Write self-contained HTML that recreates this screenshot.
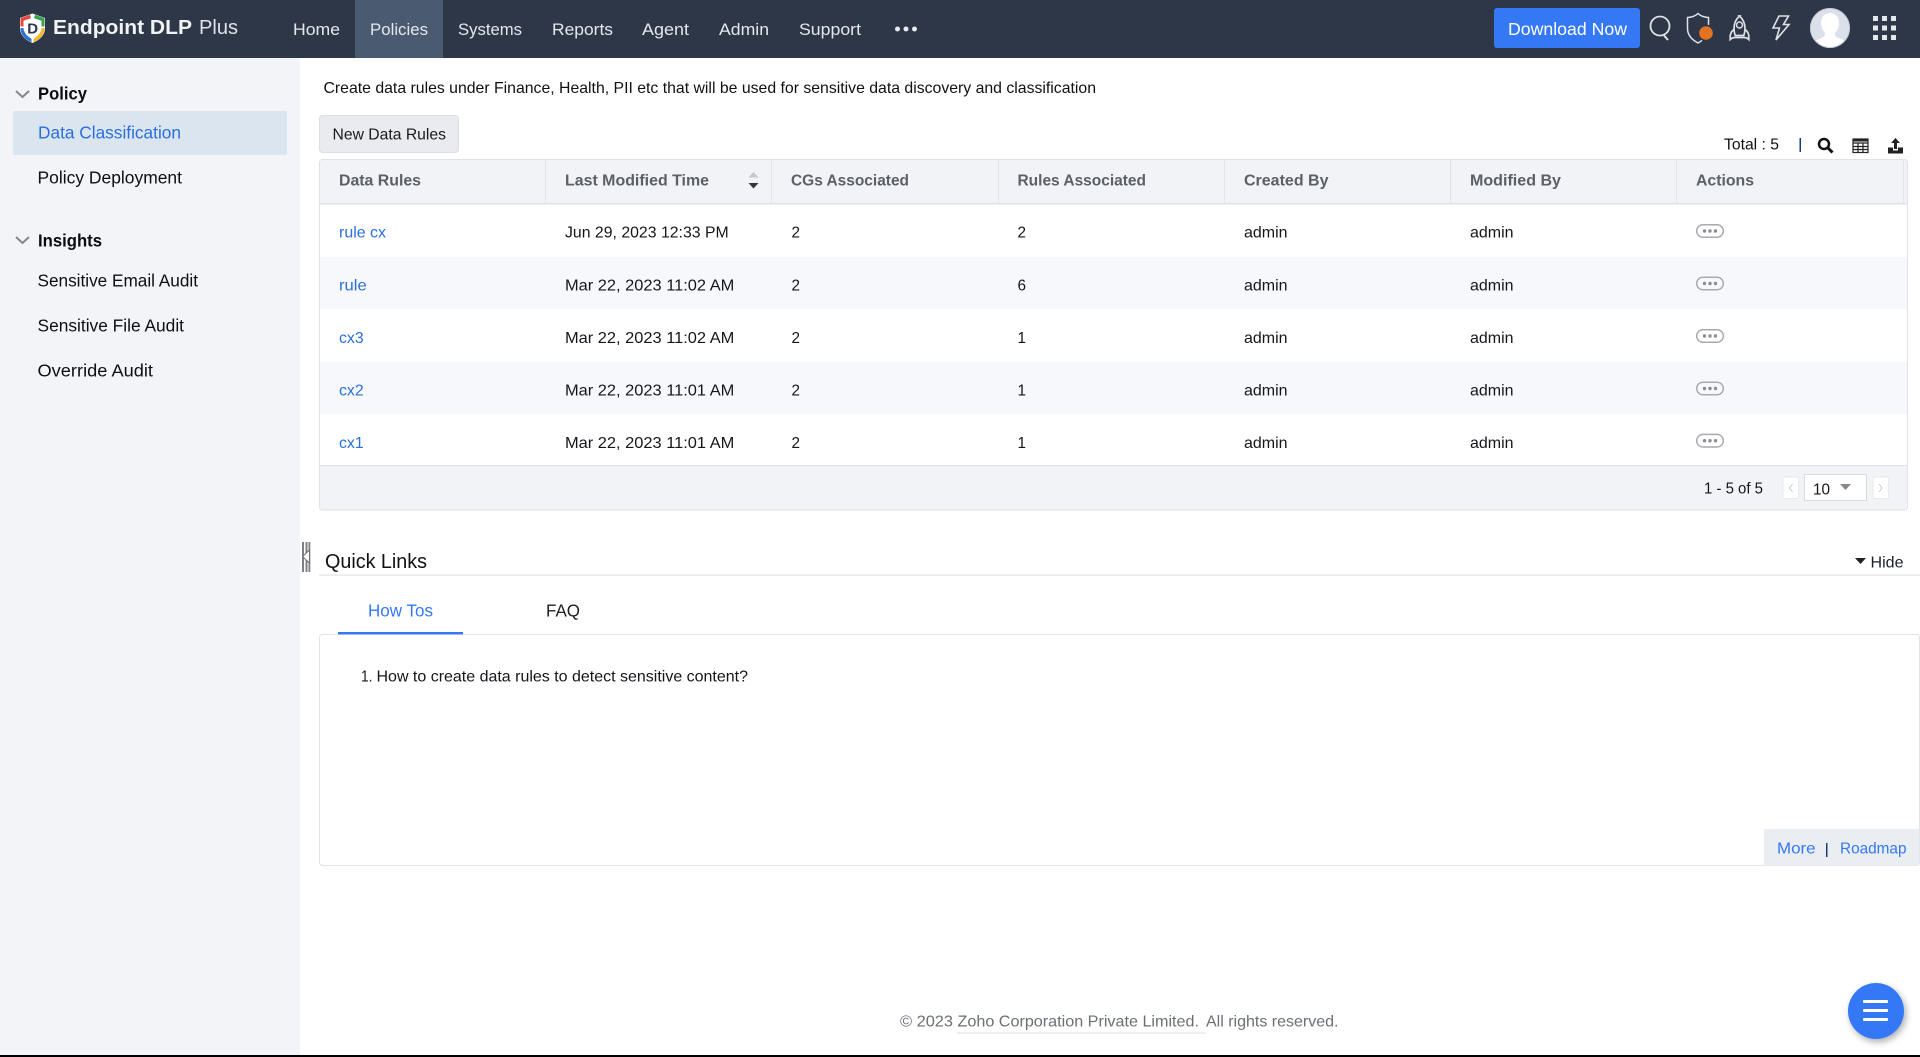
<!DOCTYPE html>
<html lang="en"><head><meta charset="utf-8"><title>Endpoint DLP Plus - Data Classification</title>
<style>
html,body{margin:0;padding:0;width:1920px;height:1057px;overflow:hidden;background:#fff}
svg{display:block;position:absolute;left:0;top:0}
text{font-family:"Liberation Sans",sans-serif;font-size:16px;fill:#111;white-space:pre}
.nav{font-size:17px;fill:#e4e7ec}
.side{font-size:17.4px;fill:#0e0e14}
.sb{font-size:17.6px;font-weight:700;fill:#0b0b10}
.th{font-size:16px;font-weight:700;fill:#5b5f66}
.td{font-size:16px;fill:#16161a}
.lk{font-size:16px;fill:#2a6fdc}
.bl{fill:#3478f6}
</style></head><body>
<svg width="1920" height="1057" viewBox="0 0 1920 1057" xmlns="http://www.w3.org/2000/svg">
<defs><filter id="s" x="-30%" y="-30%" width="170%" height="170%"><feDropShadow dx="2" dy="3" stdDeviation="3.5" flood-color="#000" flood-opacity=".32"/></filter></defs>
<rect width="1920" height="1057" fill="#fff"/>
<rect y="1055" width="1920" height="2" fill="#000"/>
<!-- sidebar -->
<rect y="58" width="300" height="997" fill="#f2f4f8"/>
<rect x="13" y="111" width="274" height="44" rx="2" fill="#dae5f0"/>
<path d="M16 91l6.500 6 6.500-6" fill="none" stroke="#83878e" stroke-width="2"/>
<path d="M16 237l6.500 6 6.500-6" fill="none" stroke="#83878e" stroke-width="2"/>
<text class="sb" x="38" y="99.500" textLength="49" lengthAdjust="spacingAndGlyphs">Policy</text>
<text class="side" x="38" y="138.500" textLength="143" lengthAdjust="spacingAndGlyphs" style="fill:#2a6fdc">Data Classification</text>
<text class="side" x="37.500" y="183.500" textLength="144.500" lengthAdjust="spacingAndGlyphs">Policy Deployment</text>
<text class="sb" x="38" y="246.500" textLength="64" lengthAdjust="spacingAndGlyphs">Insights</text>
<text class="side" x="37.500" y="286.500" textLength="160.500" lengthAdjust="spacingAndGlyphs">Sensitive Email Audit</text>
<text class="side" x="37.500" y="331.500" textLength="146.500" lengthAdjust="spacingAndGlyphs">Sensitive File Audit</text>
<text class="side" x="37.500" y="376.500" textLength="115.500" lengthAdjust="spacingAndGlyphs">Override Audit</text>
<!-- header -->
<rect width="1920" height="58" fill="#2d3747"/>
<rect x="355" width="88" height="58" fill="#4a5a70"/>
<path d="M32.500 13.500L45 18v10c0 7-5 12-12.500 15C25 40 20 35 20 28V18z" fill="#fff"/>
<path d="M20.500 18.200L30 14.800l1 3.400-7.500 2.600v5.700h-3z" fill="#e5483b"/>
<path d="M44.500 18.200L35 14.800l-1 3.400 7.500 2.600v5.700h3z" fill="#35a452"/>
<path d="M20.500 28h3c.3 4.500 3.300 8 8 10.700v3.500c-6.800-2.800-11-7.700-11-14.200z" fill="#2f74d0"/>
<path d="M44.500 28h-3c-.3 4.500-3.300 8-8 10.700v3.500c6.800-2.800 11-7.700 11-14.200z" fill="#f0b92c"/>
<text x="27.300" y="33.500" style="font-size:15px;font-weight:700;fill:#2d3747">D</text>
<text x="53" y="34" style="font-size:20.500px;font-weight:700;fill:#f2f3f5" textLength="139" lengthAdjust="spacingAndGlyphs">Endpoint DLP</text>
<text x="199" y="34" style="font-size:20.500px;fill:#e0e3e8" textLength="39" lengthAdjust="spacingAndGlyphs">Plus</text>
<text class="nav" x="293" y="35" textLength="47" lengthAdjust="spacingAndGlyphs">Home</text>
<text class="nav" x="370" y="35" textLength="58" lengthAdjust="spacingAndGlyphs">Policies</text>
<text class="nav" x="458" y="35" textLength="64" lengthAdjust="spacingAndGlyphs">Systems</text>
<text class="nav" x="552" y="35" textLength="61" lengthAdjust="spacingAndGlyphs">Reports</text>
<text class="nav" x="642" y="35" textLength="47" lengthAdjust="spacingAndGlyphs">Agent</text>
<text class="nav" x="719" y="35" textLength="50" lengthAdjust="spacingAndGlyphs">Admin</text>
<text class="nav" x="799" y="35" textLength="62" lengthAdjust="spacingAndGlyphs">Support</text>
<g fill="#e8eaee"><circle cx="897.500" cy="29" r="2.500"/><circle cx="906" cy="29" r="2.500"/><circle cx="914.500" cy="29" r="2.500"/></g>
<rect x="1494" y="8" width="146" height="40" rx="3" fill="#3478f6"/>
<text x="1508" y="35" style="font-size:17.500px;fill:#fff" textLength="119" lengthAdjust="spacingAndGlyphs">Download Now</text>
<g fill="none" stroke="#dfe2e7" stroke-width="1.800">
<circle cx="1660" cy="26" r="9.500"/><path d="M1664 35.500l4 4.500" stroke-width="2"/>
<path d="M1698 13.500c2.500 2.500 6 3.800 10.500 4v11c0 6.500-4 11-10.500 14.500-6.500-3.500-10.500-8-10.500-14.500v-11c4.500-.2 8-1.500 10.500-4z" stroke-width="1.500"/>
<path d="M1739.500 16c-4 3.500-5.500 8-5.500 12.500 0 2.500.5 5 1.200 7h8.600c.7-2 1.200-4.500 1.200-7 0-4.500-1.500-9-5.500-12.500z" stroke-width="1.700"/>
<circle cx="1739.500" cy="25" r="3" stroke-width="1.500"/>
<path d="M1734 29.500c-2.500 1.500-3.800 4-3.800 7.500v2.500c1.500-1.500 3-2 5-2h8.600c2 0 3.500.5 5 2V37c0-3.500-1.300-6-3.800-7.500" stroke-width="1.700"/>
<path d="M1779 16h9.500l-5 8.500h5.500l-13 15.500 3.500-12h-6.500z" stroke-width="1.600"/>
</g>
<circle cx="1706" cy="33" r="8.500" fill="#2d3747"/><circle cx="1706" cy="33" r="6.800" fill="#e2741f"/>
<circle cx="1830" cy="28" r="20" fill="#dce0ea"/>
<path d="M1830 13c-6 0-9 4.500-9 10 0 4 1.500 7.500 3.700 9.500v3.500c-2.500 2-6 3-9 4.500 3.500 4.500 8.500 7.500 14.300 7.500s10.800-3 14.300-7.500c-3-1.500-6.500-2.500-9-4.500v-3.500c2.200-2 3.700-5.500 3.700-9.500 0-5.500-3-10-9-10z" fill="#fff"/>
<circle cx="1830" cy="28" r="19.500" fill="none" stroke="#c6c9d1" stroke-width="1"/>
<g fill="#e6e8ec">
<rect x="1873" y="16" width="5" height="5"/><rect x="1882" y="16" width="5" height="5"/><rect x="1891" y="16" width="5" height="5"/>
<rect x="1873" y="25.500" width="5" height="5"/><rect x="1882" y="25.500" width="5" height="5"/><rect x="1891" y="25.500" width="5" height="5"/>
<rect x="1873" y="35" width="5" height="5"/><rect x="1882" y="35" width="5" height="5"/><rect x="1891" y="35" width="5" height="5"/>
</g>
<!-- top of main -->
<text x="323.500" y="93" style="font-size:15.700px;fill:#111" textLength="772.500" lengthAdjust="spacingAndGlyphs">Create data rules under Finance, Health, PII etc that will be used for sensitive data discovery and classification</text>
<rect x="319.500" y="115.500" width="139" height="37" rx="3" fill="#e9ebee" stroke="#dcdfe3"/>
<text x="332.500" y="139.500" style="font-size:15.700px;fill:#1a1a1e" textLength="113.500" lengthAdjust="spacingAndGlyphs">New Data Rules</text>
<text x="1724" y="149.500" style="font-size:15.700px" textLength="55" lengthAdjust="spacingAndGlyphs">Total : 5</text>
<rect x="1799.500" y="138" width="1.500" height="14" fill="#1b3a78"/>
<g fill="none" stroke="#111" stroke-width="2.500"><circle cx="1824" cy="144" r="5"/><path d="M1828 148l4.500 4.500" stroke-width="3"/></g>
<g fill="none" stroke="#222" stroke-width="1.200"><rect x="1853" y="139" width="15" height="13.500"/><path d="M1853 143h15M1853 146.500h15M1853 149.500h15M1858 143v9.500M1863 143v9.500"/></g>
<rect x="1853" y="138.500" width="15" height="3" fill="#222"/>
<path d="M1895.500 138l4.500 5h-3v6h-3v-6h-3zM1888 147.500h5v3h5v-3h5v6h-15z" fill="#222"/>
<!-- table -->
<rect x="319.500" y="159.500" width="1588" height="350.500" rx="3" fill="#fff" stroke="#e0e2e6"/>
<path d="M320 203V163a3 3 0 0 1 3-3h1581a3 3 0 0 1 3 3v40z" fill="#f1f3f7"/>
<rect x="320" y="203" width="1587" height="1.500" fill="#e0e2e7"/>
<rect x="320" y="257" width="1587" height="52" fill="#f7f8fc"/>
<rect x="320" y="362" width="1587" height="52" fill="#f7f8fc"/>
<g fill="#e2e4e9"><rect x="545" y="160" width="1" height="43"/><rect x="771" y="160" width="1" height="43"/><rect x="998" y="160" width="1" height="43"/><rect x="1224" y="160" width="1" height="43"/><rect x="1450" y="160" width="1" height="43"/><rect x="1676" y="160" width="1" height="43"/><rect x="1903" y="160" width="1" height="43"/></g>
<text class="th" x="339" y="185.500" textLength="82" lengthAdjust="spacingAndGlyphs">Data Rules</text>
<text class="th" x="565" y="185.500" textLength="144" lengthAdjust="spacingAndGlyphs">Last Modified Time</text>
<text class="th" x="791" y="185.500" textLength="118" lengthAdjust="spacingAndGlyphs">CGs Associated</text>
<text class="th" x="1017.500" y="185.500" textLength="128.500" lengthAdjust="spacingAndGlyphs">Rules Associated</text>
<text class="th" x="1244" y="185.500" textLength="84.500" lengthAdjust="spacingAndGlyphs">Created By</text>
<text class="th" x="1470" y="185.500" textLength="91" lengthAdjust="spacingAndGlyphs">Modified By</text>
<text class="th" x="1696" y="185.500" textLength="58" lengthAdjust="spacingAndGlyphs">Actions</text>
<path d="M753.500 172l5 5.500h-10z" fill="#c4c7cc"/><path d="M753.500 188.500l5-5.500h-10z" fill="#33363b"/>
<!-- rows -->
<text class="lk" x="339" y="237.500" textLength="47" lengthAdjust="spacingAndGlyphs">rule cx</text>
<text class="td" x="565" y="237.500" textLength="163.700" lengthAdjust="spacingAndGlyphs">Jun 29, 2023 12:33 PM</text>
<text class="td" x="791.500" y="237.500" textLength="8.500" lengthAdjust="spacingAndGlyphs">2</text>
<text class="td" x="1017.500" y="237.500" textLength="8.500" lengthAdjust="spacingAndGlyphs">2</text>
<text class="td" x="1244" y="237.500" textLength="43.500" lengthAdjust="spacingAndGlyphs">admin</text>
<text class="td" x="1470" y="237.500" textLength="43.500" lengthAdjust="spacingAndGlyphs">admin</text>
<text class="lk" x="339" y="290.500" textLength="27.700" lengthAdjust="spacingAndGlyphs">rule</text>
<text class="td" x="565" y="290.500" textLength="169.300" lengthAdjust="spacingAndGlyphs">Mar 22, 2023 11:02 AM</text>
<text class="td" x="791.500" y="290.500" textLength="8.500" lengthAdjust="spacingAndGlyphs">2</text>
<text class="td" x="1017.500" y="290.500" textLength="8.500" lengthAdjust="spacingAndGlyphs">6</text>
<text class="td" x="1244" y="290.500" textLength="43.500" lengthAdjust="spacingAndGlyphs">admin</text>
<text class="td" x="1470" y="290.500" textLength="43.500" lengthAdjust="spacingAndGlyphs">admin</text>
<text class="lk" x="339" y="342.800" textLength="24.700" lengthAdjust="spacingAndGlyphs">cx3</text>
<text class="td" x="565" y="342.800" textLength="169.300" lengthAdjust="spacingAndGlyphs">Mar 22, 2023 11:02 AM</text>
<text class="td" x="791.500" y="342.800" textLength="8.500" lengthAdjust="spacingAndGlyphs">2</text>
<text class="td" x="1017.500" y="342.800" textLength="8.500" lengthAdjust="spacingAndGlyphs">1</text>
<text class="td" x="1244" y="342.800" textLength="43.500" lengthAdjust="spacingAndGlyphs">admin</text>
<text class="td" x="1470" y="342.800" textLength="43.500" lengthAdjust="spacingAndGlyphs">admin</text>
<text class="lk" x="339" y="395.500" textLength="24.700" lengthAdjust="spacingAndGlyphs">cx2</text>
<text class="td" x="565" y="395.500" textLength="169.300" lengthAdjust="spacingAndGlyphs">Mar 22, 2023 11:01 AM</text>
<text class="td" x="791.500" y="395.500" textLength="8.500" lengthAdjust="spacingAndGlyphs">2</text>
<text class="td" x="1017.500" y="395.500" textLength="8.500" lengthAdjust="spacingAndGlyphs">1</text>
<text class="td" x="1244" y="395.500" textLength="43.500" lengthAdjust="spacingAndGlyphs">admin</text>
<text class="td" x="1470" y="395.500" textLength="43.500" lengthAdjust="spacingAndGlyphs">admin</text>
<text class="lk" x="339" y="448" textLength="24.700" lengthAdjust="spacingAndGlyphs">cx1</text>
<text class="td" x="565" y="448" textLength="169.300" lengthAdjust="spacingAndGlyphs">Mar 22, 2023 11:01 AM</text>
<text class="td" x="791.500" y="448" textLength="8.500" lengthAdjust="spacingAndGlyphs">2</text>
<text class="td" x="1017.500" y="448" textLength="8.500" lengthAdjust="spacingAndGlyphs">1</text>
<text class="td" x="1244" y="448" textLength="43.500" lengthAdjust="spacingAndGlyphs">admin</text>
<text class="td" x="1470" y="448" textLength="43.500" lengthAdjust="spacingAndGlyphs">admin</text>
<!-- action pills -->
<g fill="#fff" stroke="#a8aaaf" stroke-width="1.500">
<rect x="1696.700" y="224.700" width="26.600" height="12.600" rx="6.300"/>
<rect x="1696.700" y="277.200" width="26.600" height="12.600" rx="6.300" fill="#f7f8fc"/>
<rect x="1696.700" y="329.700" width="26.600" height="12.600" rx="6.300"/>
<rect x="1696.700" y="382.200" width="26.600" height="12.600" rx="6.300" fill="#f7f8fc"/>
<rect x="1696.700" y="434.400" width="26.600" height="12.600" rx="6.300"/>
</g>
<g fill="#8a8d92">
<circle cx="1704.500" cy="231" r="1.700"/><circle cx="1710" cy="231" r="1.700"/><circle cx="1715.500" cy="231" r="1.700"/>
<circle cx="1704.500" cy="283.500" r="1.700"/><circle cx="1710" cy="283.500" r="1.700"/><circle cx="1715.500" cy="283.500" r="1.700"/>
<circle cx="1704.500" cy="336" r="1.700"/><circle cx="1710" cy="336" r="1.700"/><circle cx="1715.500" cy="336" r="1.700"/>
<circle cx="1704.500" cy="388.500" r="1.700"/><circle cx="1710" cy="388.500" r="1.700"/><circle cx="1715.500" cy="388.500" r="1.700"/>
<circle cx="1704.500" cy="440.700" r="1.700"/><circle cx="1710" cy="440.700" r="1.700"/><circle cx="1715.500" cy="440.700" r="1.700"/>
</g>
<!-- table footer -->
<path d="M320 465h1587v41.500a3 3 0 0 1-3 3H323a3 3 0 0 1-3-3z" fill="#f1f3f7"/>
<rect x="320" y="465" width="1587" height="1" fill="#dfe1e6"/>
<text class="td" x="1704" y="493.500" textLength="59" lengthAdjust="spacingAndGlyphs">1 - 5 of 5</text>
<rect x="1783" y="477" width="15.500" height="21.500" rx="2" fill="#fff" stroke="#e9eaec"/>
<path d="M1792.500 484l-3 4 3 4" fill="none" stroke="#c8cace" stroke-width="1"/>
<rect x="1804.500" y="474.500" width="62" height="26" fill="#fff" stroke="#d8dbe0"/>
<text class="td" x="1813" y="494.500" textLength="17" lengthAdjust="spacingAndGlyphs">10</text>
<path d="M1840 484h11l-5.500 6z" fill="#85888d"/>
<rect x="1873" y="477" width="15.500" height="21.500" rx="2" fill="#fff" stroke="#e9eaec"/>
<path d="M1879 484l3 4-3 4" fill="none" stroke="#c8cace" stroke-width="1"/>
<!-- quick links -->
<g fill="#7d8084"><rect x="302" y="542" width="2" height="30"/><rect x="305.500" y="542" width="2" height="30"/><rect x="308.500" y="542" width="1.800" height="30"/></g>
<path d="M309.500 550l-7 6.500 7 6.500z" fill="#fff" stroke="#666" stroke-width=".9"/>
<text x="325" y="568" style="font-size:20px;fill:#111" textLength="102" lengthAdjust="spacingAndGlyphs">Quick Links</text>
<rect x="319" y="574.500" width="1601" height="1.200" fill="#e3e4e8"/>
<path d="M1855 558h11l-5.500 6z" fill="#222"/>
<text x="1870.500" y="567.500" style="font-size:16px;fill:#1a1f30" textLength="33" lengthAdjust="spacingAndGlyphs">Hide</text>
<text x="368" y="616.500" class="bl" style="font-size:17.500px" textLength="65" lengthAdjust="spacingAndGlyphs">How Tos</text>
<text x="546" y="616.500" style="font-size:17.500px;fill:#1e1e24" textLength="34" lengthAdjust="spacingAndGlyphs">FAQ</text>
<rect x="319.500" y="634.500" width="1600" height="231" rx="3" fill="#fff" stroke="#e3e4e8"/>
<rect x="338" y="632" width="125" height="2.400" fill="#3478f6"/>
<text x="361" y="681.500" style="font-size:15.700px;fill:#16161a" textLength="11.500" lengthAdjust="spacingAndGlyphs">1.</text>
<text x="376.500" y="681.500" style="font-size:15.700px;fill:#16161a" textLength="371.500" lengthAdjust="spacingAndGlyphs">How to create data rules to detect sensitive content?</text>
<rect x="1764" y="829" width="155" height="36.500" fill="#eaedf2"/>
<text x="1777" y="853.500" class="bl" style="font-size:15.700px" textLength="38.500" lengthAdjust="spacingAndGlyphs">More</text>
<rect x="1826" y="843" width="1.500" height="14" fill="#1b3a78"/>
<text x="1840" y="853.500" class="bl" style="font-size:15.700px" textLength="66.500" lengthAdjust="spacingAndGlyphs">Roadmap</text>
<!-- footer -->
<text x="900" y="1026.500" style="font-size:15.700px;fill:#6b6f76" textLength="53" lengthAdjust="spacingAndGlyphs">© 2023</text>
<text x="957.500" y="1026.500" style="font-size:15.700px;fill:#6b6f76" textLength="241.500" lengthAdjust="spacingAndGlyphs">Zoho Corporation Private Limited.</text>
<text x="1206" y="1026.500" style="font-size:15.700px;fill:#6b6f76" textLength="132.500" lengthAdjust="spacingAndGlyphs">All rights reserved.</text>
<rect x="957" y="1032.500" width="249" height="1" fill="#dcdde0"/>
<!-- FAB -->
<circle cx="1876" cy="1011" r="28" fill="#3478f6" filter="url(#s)"/>
<g fill="#fff"><rect x="1863" y="1000" width="25" height="3" rx="1"/><rect x="1863" y="1009" width="25" height="3" rx="1"/><rect x="1863" y="1018" width="25" height="3" rx="1"/></g>
</svg>
</body></html>
